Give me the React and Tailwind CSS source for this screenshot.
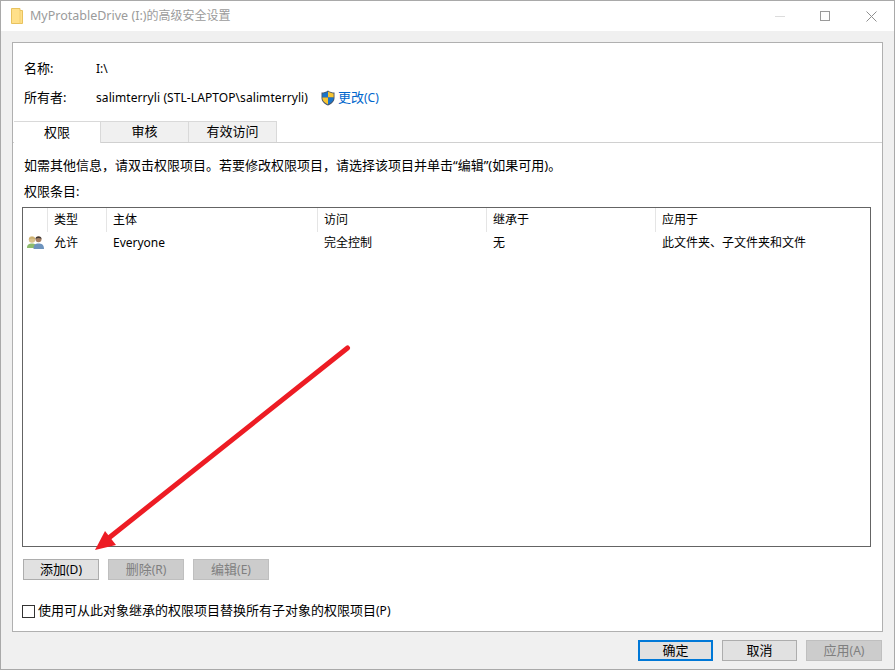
const font = { fontFamily: '"Noto Sans", "Noto Sans CJK SC", sans-serif' };

const columns = [
  { title: '', width: 'w-[25px]' },
  { title: '类型', width: 'w-[59px]' },
  { title: '主体', width: 'w-[211px]' },
  { title: '访问', width: 'w-[169px]' },
  { title: '继承于', width: 'w-[169px]' },
  { title: '应用于', width: 'flex-1' },
];

const FolderIcon = () => (
  <svg width="13" height="16" viewBox="0 0 13 16">
    <path d="M0.5 0.5H9V2.5H11.5V15.5H0.5Z" fill="#ffe08a" stroke="#e8c25e" />
    <path d="M9 2.5V15.5" stroke="#f2cf72" />
  </svg>
);

const ShieldIcon = () => (
  <svg width="14" height="16" viewBox="0 0 14 16">
    <path d="M7 0.5C9 2 11 2.6 13.5 2.6V8C13.5 11.5 10.5 14 7 15.5C3.5 14 0.5 11.5 0.5 8V2.6C3 2.6 5 2 7 0.5Z" fill="#4a5568" />
    <path d="M7 1.6V7.5H1.4V3.4C3.4 3.3 5.3 2.8 7 1.6Z" fill="#1a74c9" />
    <path d="M7 1.6C8.7 2.8 10.6 3.3 12.6 3.4V7.5H7Z" fill="#f7c531" />
    <path d="M1.4 7.5H7V14.4C4 13 1.4 11 1.4 8Z" fill="#f7c531" />
    <path d="M7 7.5H12.6V8C12.6 11 10 13 7 14.4Z" fill="#1a74c9" />
  </svg>
);

const UsersIcon = () => (
  <svg width="17" height="15" viewBox="0 0 17 15">
    <path d="M0 13C0 9.5 2 8.5 5 8.5C8 8.5 9.5 9.5 9.5 13H0Z" fill="#8dbb6c" />
    <circle cx="5" cy="4.5" r="3.2" fill="#d9c08a" />
    <path d="M1.8 4.5C1.8 1.5 8.2 1 8.2 4.5C6.5 3 3.5 3 1.8 4.5Z" fill="#c9ad6b" />
    <path d="M6.5 14C6.5 9.5 8.5 8.5 11.5 8.5C14.5 8.5 17 9.5 17 14H6.5Z" fill="#6d93bd" />
    <circle cx="11.5" cy="4.2" r="3" fill="#a57f62" />
    <path d="M8.5 4C8.5 0.8 14.5 0.8 14.5 4C12.5 2.8 10.5 2.8 8.5 4Z" fill="#3f3a38" />
  </svg>
);

const Button = ({ children, disabled, primary, width = 'w-[76px]' }) => (
  <button
    className={`h-[21px] ${width} text-xs leading-none ${
      primary
        ? 'border-2 border-[#0078d7] bg-[#e1e1e1] text-black'
        : disabled
        ? 'border border-[#bfbfbf] bg-[#cccccc] text-[#7f7f7f]'
        : 'border border-[#adadad] bg-[#e1e1e1] text-black'
    }`}
  >
    {children}
  </button>
);

const Tab = ({ children, active }) => (
  <div
    className={`flex items-center justify-center border-[#d9d9d9] text-[13px] ${
      active
        ? 'relative z-10 -mb-px h-[22px] w-[87px] border-t border-r bg-white'
        : 'h-[21px] w-[88px] border-t border-r bg-[#f0f0f0]'
    }`}
  >
    {children}
  </div>
);

export default function App() {
  return (
    <div style={font} className="relative flex h-[670px] w-[895px] flex-col overflow-hidden bg-white text-xs text-black">
      <div className="flex h-[670px] flex-col border border-[#a9a9a9] bg-[#f0f0f0]">
        {/* title bar */}
        <div className="flex h-[30px] shrink-0 items-center bg-white pl-[10px]">
          <FolderIcon />
          <span className="ml-[6px] text-[#9b9b9b]">
            <span className="text-[12.5px]">MyProtableDrive (I:)</span>的高级安全设置
          </span>
          <div className="ml-auto flex items-center">
            <div className="mr-[35px] h-px w-[10px] bg-[#dcdcdc]" />
            <div className="mr-[36px] h-[10px] w-[10px] border border-[#9a9a9a]" />
            <svg className="mr-[17px]" width="11" height="11" viewBox="0 0 11 11">
              <path d="M0.5 0.5L10.5 10.5M10.5 0.5L0.5 10.5" stroke="#8f8f8f" />
            </svg>
          </div>
        </div>

        {/* main panel */}
        <div className="mx-[11px] mt-[11px] flex h-[590px] flex-col border border-[#b0b0b0] bg-white">
          <div className="flex h-[78px] shrink-0 flex-col pl-[11px] pt-[16px]">
            <div className="flex h-[20px] items-center">
              <span className="w-[72px] text-[13px]">名称:</span>
              <span>I:\</span>
            </div>
            <div className="mt-[9px] flex h-[20px] items-center">
              <span className="w-[72px] text-[13px]">所有者:</span>
              <span className="tracking-[0.08px]">salimterryli (STL-LAPTOP\salimterryli)</span>
              <span className="ml-[13px] mr-[3px]"><ShieldIcon /></span>
              <span className="text-[#0066cc]"><span className="text-[13px]">更改</span>(C)</span>
            </div>
          </div>

          <div className="flex h-[22px] shrink-0 items-start border-b border-[#d0d0d0] pl-px">
            <Tab active>权限</Tab>
            <Tab>审核</Tab>
            <Tab>有效访问</Tab>
          </div>

          <div className="flex flex-1 flex-col pl-[9px] pr-[11px]">
            <p className="mt-[12px] h-[20px] pl-[2px] text-[13px] leading-[20px]">如需其他信息，请双击权限项目。若要修改权限项目，请选择该项目并单击“编辑”(如果可用)。</p>
            <p className="mt-[6px] h-[20px] pl-[2px] text-[13px] leading-[20px]">权限条目:</p>

            {/* permission list */}
            <div className="mt-[6px] flex h-[340px] flex-col border border-[#646464] bg-white">
              <div className="flex h-[24px] shrink-0">
                {columns.map((col, i) => (
                  <div key={i} className={`${col.width} flex items-center border-r border-[#e5e5e5] pl-[6px] last:border-r-0`}>
                    {col.title}
                  </div>
                ))}
              </div>
              <div className="flex h-[21px] items-center">
                <div className="flex w-[25px] justify-end pr-[4px]"><UsersIcon /></div>
                <div className="w-[59px] pl-[6px]">允许</div>
                <div className="w-[211px] pl-[6px]">Everyone</div>
                <div className="w-[169px] pl-[6px]">完全控制</div>
                <div className="w-[169px] pl-[6px]">无</div>
                <div className="flex-1 pl-[6px]">此文件夹、子文件夹和文件</div>
              </div>
            </div>

            <div className="mt-[12px] flex gap-[9px] pl-px">
              <Button><span className="text-[13px]">添加</span>(D)</Button>
              <Button disabled><span className="text-[13px]">删除</span>(R)</Button>
              <Button disabled><span className="text-[13px]">编辑</span>(E)</Button>
            </div>

            <label className="mt-[22px] flex items-center">
              <span className="h-[13px] w-[13px] border border-[#333333] bg-white" />
              <span className="ml-[3px] pb-[2px]"><span className="text-[13px]">使用可从此对象继承的权限项目替换所有子对象的权限项目</span>(P)</span>
            </label>
          </div>
        </div>

        {/* footer buttons */}
        <div className="mt-[8px] flex justify-end gap-[9px] pr-[12px]">
          <Button primary width="w-[75px]"><span className="text-[13px]">确定</span></Button>
          <Button width="w-[75px]"><span className="text-[13px]">取消</span></Button>
          <Button disabled><span className="text-[13px]">应用</span>(A)</Button>
        </div>
      </div>

      {/* red annotation arrow */}
      <svg className="pointer-events-none absolute left-0 top-0" width="895" height="670" viewBox="0 0 895 670">
        <path d="M347.5 348L105 541" stroke="#ed1c24" strokeWidth="5" strokeLinecap="round" fill="none" />
        <path d="M95 550L105 531L116 545Z" fill="#ed1c24" />
      </svg>
    </div>
  );
}
